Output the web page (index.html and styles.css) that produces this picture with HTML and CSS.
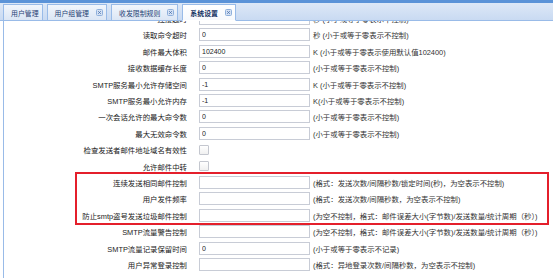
FILE: index.html
```html
<!DOCTYPE html>
<html lang="zh-CN">
<head>
    <meta charset="UTF-8">
    <title>系统设置</title>
    <link rel="stylesheet" href="styles.css">
</head>
<body>
    <div class="tabbar">
        <div class="tab">用户管理</div>
        <div class="tab">用户组管理<span class="close"><svg width="7" height="7" viewBox="0 0 7 7"><rect x="0.5" y="0.5" width="6" height="6" rx="1" fill="#d3e0f3" stroke="#8fb0dc"/><path d="M2.2 2.2l2.6 2.6M4.8 2.2l-2.6 2.6" stroke="#4f76b0" stroke-width="0.9"/></svg></span></div>
        <div class="tab">收发限制规则<span class="close"><svg width="7" height="7" viewBox="0 0 7 7"><rect x="0.5" y="0.5" width="6" height="6" rx="1" fill="#d3e0f3" stroke="#8fb0dc"/><path d="M2.2 2.2l2.6 2.6M4.8 2.2l-2.6 2.6" stroke="#4f76b0" stroke-width="0.9"/></svg></span></div>
        <div class="tab active">系统设置<span class="close"><svg width="7" height="7" viewBox="0 0 7 7"><rect x="0.5" y="0.5" width="6" height="6" rx="1" fill="#d3e0f3" stroke="#8fb0dc"/><path d="M2.2 2.2l2.6 2.6M4.8 2.2l-2.6 2.6" stroke="#4f76b0" stroke-width="0.9"/></svg></span></div>
    </div>

    <div class="panel">
        <div class="form">
            <div class="row"><label>连接超时</label><input type="text" value="0"><span class="note">秒 (小于或等于零表示不控制)</span></div>
            <div class="row"><label>读取命令超时</label><input type="text" value="0"><span class="note">秒 (小于或等于零表示不控制)</span></div>
            <div class="row"><label>邮件最大体积</label><input type="text" value="102400"><span class="note">K (小于或等于零表示使用默认值102400)</span></div>
            <div class="row"><label>接收数据缓存长度</label><input type="text" value="0"><span class="note">(小于或等于零表示不控制)</span></div>
            <div class="row"><label>SMTP服务最小允许存储空间</label><input type="text" value="-1"><span class="note">K (小于或等于零表示不控制)</span></div>
            <div class="row"><label>SMTP服务最小允许内存</label><input type="text" value="-1"><span class="note">K(小于或等于零表示不控制)</span></div>
            <div class="row"><label>一次会话允许的最大命令数</label><input type="text" value="0"><span class="note">(小于或等于零表示不控制)</span></div>
            <div class="row"><label>最大无效命令数</label><input type="text" value="0"><span class="note">(小于或等于零表示不控制)</span></div>
            <div class="row"><label>检查发送者邮件地址域名有效性</label><span class="check"></span></div>
            <div class="row"><label>允许邮件中转</label><span class="check"></span></div>
            <div class="highlight">
                <div class="row"><label>连续发送相同邮件控制</label><input type="text" value=""><span class="note">(格式：发送次数/间隔秒数/锁定时间(秒)，为空表示不控制)</span></div>
                <div class="row"><label>用户发件频率</label><input type="text" value=""><span class="note">(格式：发送次数/间隔秒数，为空表示不控制)</span></div>
                <div class="row"><label>防止smtp盗号发送垃圾邮件控制</label><input type="text" value=""><span class="note">(为空不控制，格式：邮件误差大小(字节数)/发送数量/统计周期（秒）)</span></div>
            </div>
            <div class="row"><label>SMTP流量警告控制</label><input type="text" value=""><span class="note">(为空不控制，格式：邮件误差大小(字节数)/发送数量/统计周期（秒）)</span></div>
            <div class="row"><label>SMTP流量记录保留时间</label><input type="text" value="0"><span class="note">(小于或等于零表示不记录)</span></div>
            <div class="row"><label>用户异常登录控制</label><input type="text" value=""><span class="note">(格式：异地登录次数/间隔秒数，为空表示不控制)</span></div>
        </div>
    </div>
</body>
</html>
```

FILE: styles.css
```css
html, body { margin: 0; padding: 0; background: #fff; }
body { font-family: "Liberation Sans", "Noto Sans CJK SC", sans-serif; font-size: 7.4px; color: #222; overflow: hidden; height: 278px; }

.tabbar {
    height: 17px;
    border-top: 3px solid #5b93d8;
    border-bottom: 1px solid #99bbe8;
    background: linear-gradient(#dde8f7, #c9daf2);
    display: flex;
    align-items: flex-end;
    padding-left: 3px;
    gap: 4px;
    position: relative;
    z-index: 2;
}
.tab {
    height: 15px;
    margin-bottom: -1px;
    display: flex;
    align-items: center;
    padding: 0 3px 0 7px;
    border: 1px solid #99bbe8;
    background: linear-gradient(#f2f6fc, #dbe6f5);
    color: #1f3f73;
    font-size: 6.9px;
}
.tab .close { display: flex; margin-left: 7px; }
.tab.active {
    background: linear-gradient(#ffffff, #f6f9fd);
    border-bottom-color: #fff;
    color: #0f2e5e;
    font-weight: bold;
}

.panel {
    height: 258px;
    border-left: 1px solid #99bbe8;
    margin-left: 3px;
    overflow: hidden;
}
.form { margin-top: -10.6px; }

.row {
    display: grid;
    grid-template-columns: 195px 111px auto;
    align-items: center;
    height: 16.4px;
}
.row label {
    box-sizing: border-box;
    padding-right: 12px;
    text-align: right;
    white-space: nowrap;
}
.row input {
    box-sizing: border-box;
    width: 111px;
    height: 13px;
    margin: 0;
    padding: 0 2px;
    border: 1px solid #c8ccd6;
    background: #fff;
    font: inherit;
    font-size: 7px;
    color: #222;
}
.note { margin-left: 3px; white-space: nowrap; color: #333; }
.check {
    width: 8px;
    height: 8px;
    border: 1px solid #c4c7cf;
    border-radius: 1px;
    background: linear-gradient(#fff, #f0f0f0);
}

.highlight {
    margin: -2px 0 -2px 71px;
    width: 470px;
    border: 2px solid #e41f2b;
}
.highlight .row { margin-left: -73px; }
```
